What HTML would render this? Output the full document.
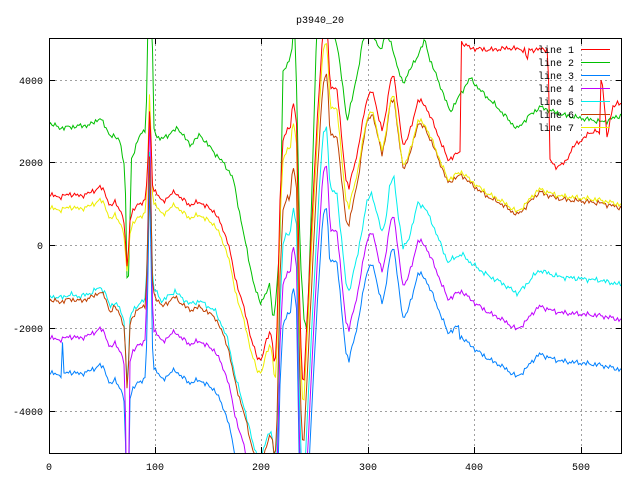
<!DOCTYPE html>
<html><head><meta charset="utf-8">
<style>
html,body{margin:0;padding:0;background:#fff;width:640px;height:480px;overflow:hidden;}
svg{display:block}
text{font-family:"Liberation Mono","DejaVu Sans Mono",monospace;font-size:10px;fill:#000}
</style></head>
<body>
<svg id="s" width="640" height="480" xmlns="http://www.w3.org/2000/svg">
<defs><clipPath id="c"><rect x="49" y="38" width="573" height="415"/></clipPath></defs>
<rect width="640" height="480" fill="#fff"/>
<g id="grid" stroke="#a0a0a0" stroke-dasharray="2,3" stroke-width="1"></g>
<g id="lines" clip-path="url(#c)" fill="none" stroke-width="1"></g>
<rect x="49.5" y="38.5" width="572" height="415" fill="none" stroke="#000"/>
<g id="ticks" stroke="#000"></g>
<text x="320" y="23" text-anchor="middle">p3940_20</text>
<g id="labels"></g>
<g id="legend"></g>
</svg>
<script>
var NS="http://www.w3.org/2000/svg";
function el(p,t,a,txt){var e=document.createElementNS(NS,t);for(var k in a)e.setAttribute(k,a[k]);if(txt!=null)e.textContent=txt;document.getElementById(p).appendChild(e);return e;}
var xs=[[0,49],[100,155],[200,261],[300,368],[400,474],[500,581]];
xs.forEach(function(v){ if(v[0]>0) el("grid","line",{x1:v[1]+.5,y1:39,x2:v[1]+.5,y2:453});
 el("ticks","line",{x1:v[1]+.5,y1:453,x2:v[1]+.5,y2:447}); el("ticks","line",{x1:v[1]+.5,y1:38,x2:v[1]+.5,y2:44});
 el("labels","text",{x:v[1],y:470,"text-anchor":"middle"},String(v[0]));});
var ys=[[4000,80],[2000,162],[0,245],[-2000,328],[-4000,411]];
ys.forEach(function(v){ el("grid","line",{x1:50,y1:v[1]+.5,x2:621,y2:v[1]+.5});
 el("ticks","line",{x1:49,y1:v[1]+.5,x2:55,y2:v[1]+.5}); el("ticks","line",{x1:622,y1:v[1]+.5,x2:616,y2:v[1]+.5});
 el("labels","text",{x:43,y:v[1]+4,"text-anchor":"end"},String(v[0]));});
function interp(P,x){if(x<=P[0][0])return P[0][1];for(var i=1;i<P.length;i++){if(x<=P[i][0]){var a=P[i-1],b=P[i];return a[1]+(b[1]-a[1])*(x-a[0])/(b[0]-a[0]);}}return P[P.length-1][1];}
var Y=[[49,208],[60,210],[70,207],[80,209],[90,206],[100,200],[105,205],[110,220],[115,215],[120,222],[124,235],[126,255],[128,240],[132,225],[138,218],[145,213],[148,190],[150,143],[152,200],[156,205],[162,215],[168,210],[175,205],[182,212],[190,218],[200,215],[210,222],[215,225],[222,240],[228,255],[235,290],[245,325],[252,355],[258,373],[262,370],[266,355],[270,345],[272,350],[275,385],[277,350],[280,220],[283,160],[287,148],[290,152],[293,120],[297,145],[299,300],[302,400],[304,400],[308,320],[313,220],[317,145],[320,95],[323,50],[327,42],[330,105],[334,108],[337,110],[341,150],[346,200],[349,208],[353,190],[358,170],[363,140],[367,118],[372,110],[377,130],[382,150],[386,135],[390,100],[394,95],[398,130],[403,165],[408,158],[413,140],[418,120],[425,125],[432,140],[440,160],[448,180],[455,175],[462,172],[470,180],[480,188],[490,195],[500,200],[510,207],[517,212],[525,205],[533,195],[540,189],[550,193],[560,196],[580,198],[600,200],[622,205]];
var G1=[[49,123],[60,128],[90,125],[100,118],[110,135],[120,140],[125,170],[127,277],[129,277],[131,160],[140,135],[146,128],[148,20],[152,20],[154,130],[160,140],[168,135],[178,128],[190,145],[200,135],[213,151],[225,165],[233,178],[240,215],[247,251],[254,285],[260,303],[265,295],[270,285],[273,321],[276,300],[280,238],[283,71],[287,65],[292,51],[294,20],[296,60],[300,250],[304,320],[307,331],[310,250],[314,120],[317,20],[330,20]];
var G2=[[330,20],[337,45],[342,80],[347,121],[352,100],[358,70],[363,40],[370,30],[380,50],[386,35],[392,45],[398,70],[403,83],[410,70],[418,55],[425,40],[430,60],[440,85],[450,112],[460,95],[470,78],[480,90],[497,107],[517,129],[530,115],[540,107],[563,115],[580,118],[603,122],[622,115]];
var R2=[[459,175],[460,150],[461,42],[470,48],[490,50],[510,48],[525,50],[527,62],[529,50],[548,49],[550,160],[555,167],[565,163],[573,147],[590,133],[597,130],[600,137],[601,80],[603,87],[607,137],[613,107],[617,102],[622,105]];
var BR=[[49,92],[270,92],[283,50],[340,25],[365,3],[622,3]];
function noise(x,s){return Math.sin(x*1.7+s)*1.4+Math.sin(x*3.1+s*2.3)*1.0+Math.sin(x*0.53+s*0.7)*1.0;}
function spikes(x,y,k){
 if(x>=125&&x<=130){var d={pur:200,blu:150,cyan:60,brown:60,red:40,yel:30}[k]||0;y+=d*(1-Math.abs(x-127.5)/2.5);}
 if(x>=146&&x<=153){var u={pur:180,blu:140,cyan:90,brown:90,red:30,yel:60}[k]||0;y-=u*(1-Math.abs(x-149.5)/3.5);}
 if(k=="blu"&&x>=61&&x<=64){y-=30*(1-Math.abs(x-62.5)/1.5);}
 return y;}
function series(k,col){
 var pts=[];
 for(var x=49;x<=622;x+=1.5){
  var y=interp(Y,x),s=k.length*3.7;
  if(k=="red"){ if(x<459) y=y-(x<275?13:20); else y=interp(R2,x);}
  else if(k=="cyan"){y+= 88-8*(x-49)/573;}
  else if(k=="brown"){y+= interp(BR,x);}
  else if(k=="pur"){y+=130-15*(x-49)/573;}
  else if(k=="blu"){y+=165-(x>330&&x<460?12:0);}
  else if(k=="green"){ y = x<330?interp(G1,x):interp(G2,x);}
  y=spikes(x,y,k);
  y+=noise(x,s);
  pts.push(x.toFixed(1)+","+y.toFixed(1));
 }
 el("lines","polyline",{points:pts.join(" "),stroke:col});
}
series("green","#00c000");
series("blu","#0080ff");
series("pur","#c000ff");
series("cyan","#00eeee");
series("brown","#c04000");
series("yel","#eeee00");
series("red","#ff0000");
var leg=[["line 1","#ff0000"],["line 2","#00c000"],["line 3","#0080ff"],["line 4","#c000ff"],["line 5","#00eeee"],["line 6","#c04000"],["line 7","#eeee00"]];
leg.forEach(function(l,i){var y=49+i*13;el("legend","text",{x:574,y:y+4,"text-anchor":"end"},l[0]);
 el("legend","line",{x1:581,y1:y+.5,x2:610,y2:y+.5,stroke:l[1]});});
</script>
</body></html>
